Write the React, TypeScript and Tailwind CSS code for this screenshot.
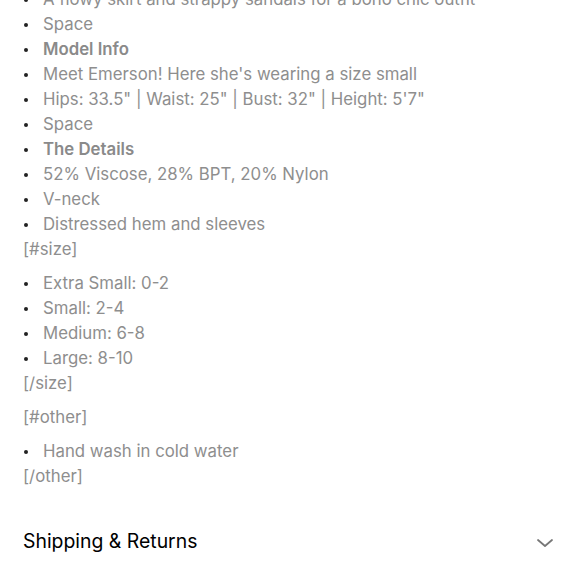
const first = [
  { t: 'A flowy skirt and strappy sandals for a boho chic outfit' },
  { t: 'Space' },
  { t: 'Model Info', b: true },
  { t: "Meet Emerson! Here she's wearing a size small" },
  { t: 'Hips: 33.5" | Waist: 25" | Bust: 32" | Height: 5\'7"' },
  { t: 'Space' },
  { t: 'The Details', b: true },
  { t: '52% Viscose, 28% BPT, 20% Nylon' },
  { t: 'V-neck' },
  { t: 'Distressed hem and sleeves' },
]

const sizes = ['Extra Small: 0-2', 'Small: 2-4', 'Medium: 6-8', 'Large: 8-10']

function Item({ text, bold }: { text: string; bold?: boolean }) {
  return (
    <li className="flex items-center h-[25px]">
      <span className="w-[20px] shrink-0 flex">
        <span className="ml-[1px] w-[4px] h-[4px] rounded-full bg-[#222]" />
      </span>
      <span className={`whitespace-nowrap ${bold ? 'font-semibold text-[#8a8a8a]' : 'text-[#8e8e8e]'}`}>{text}</span>
    </li>
  )
}

export default function App() {
  return (
    <div
      className="w-[580px] h-[580px] overflow-hidden bg-white text-[16.8px] leading-[25px]"
      style={{ fontFamily: 'Inter, "Noto Sans", sans-serif' }}
    >
      <div className="pl-[23px] pr-[24px] -mt-[13px]">
        <ul>
          {first.map((l, i) => (
            <Item key={i} text={l.t} bold={l.b} />
          ))}
        </ul>
        <p className="text-[#8e8e8e] mb-[9px]">[#size]</p>
        <ul>
          {sizes.map((s) => (
            <Item key={s} text={s} />
          ))}
        </ul>
        <p className="text-[#8e8e8e] mb-[9px]">[/size]</p>
        <p className="text-[#8e8e8e] mb-[9px]">[#other]</p>
        <ul>
          <Item text="Hand wash in cold water" />
        </ul>
        <p className="text-[#8e8e8e]">[/other]</p>
        <div className="mt-[27px] flex items-center justify-between h-[50px]">
          <span className="text-[19.4px] text-black">Shipping &amp; Returns</span>
          <svg width="18" height="10" viewBox="0 0 18 10" className="mr-[2px] mt-[4px]">
            <path d="M2 2 L9 8 L16 2" fill="none" stroke="#777" strokeWidth="1.8" strokeLinecap="round" strokeLinejoin="round" />
          </svg>
        </div>
      </div>
    </div>
  )
}
